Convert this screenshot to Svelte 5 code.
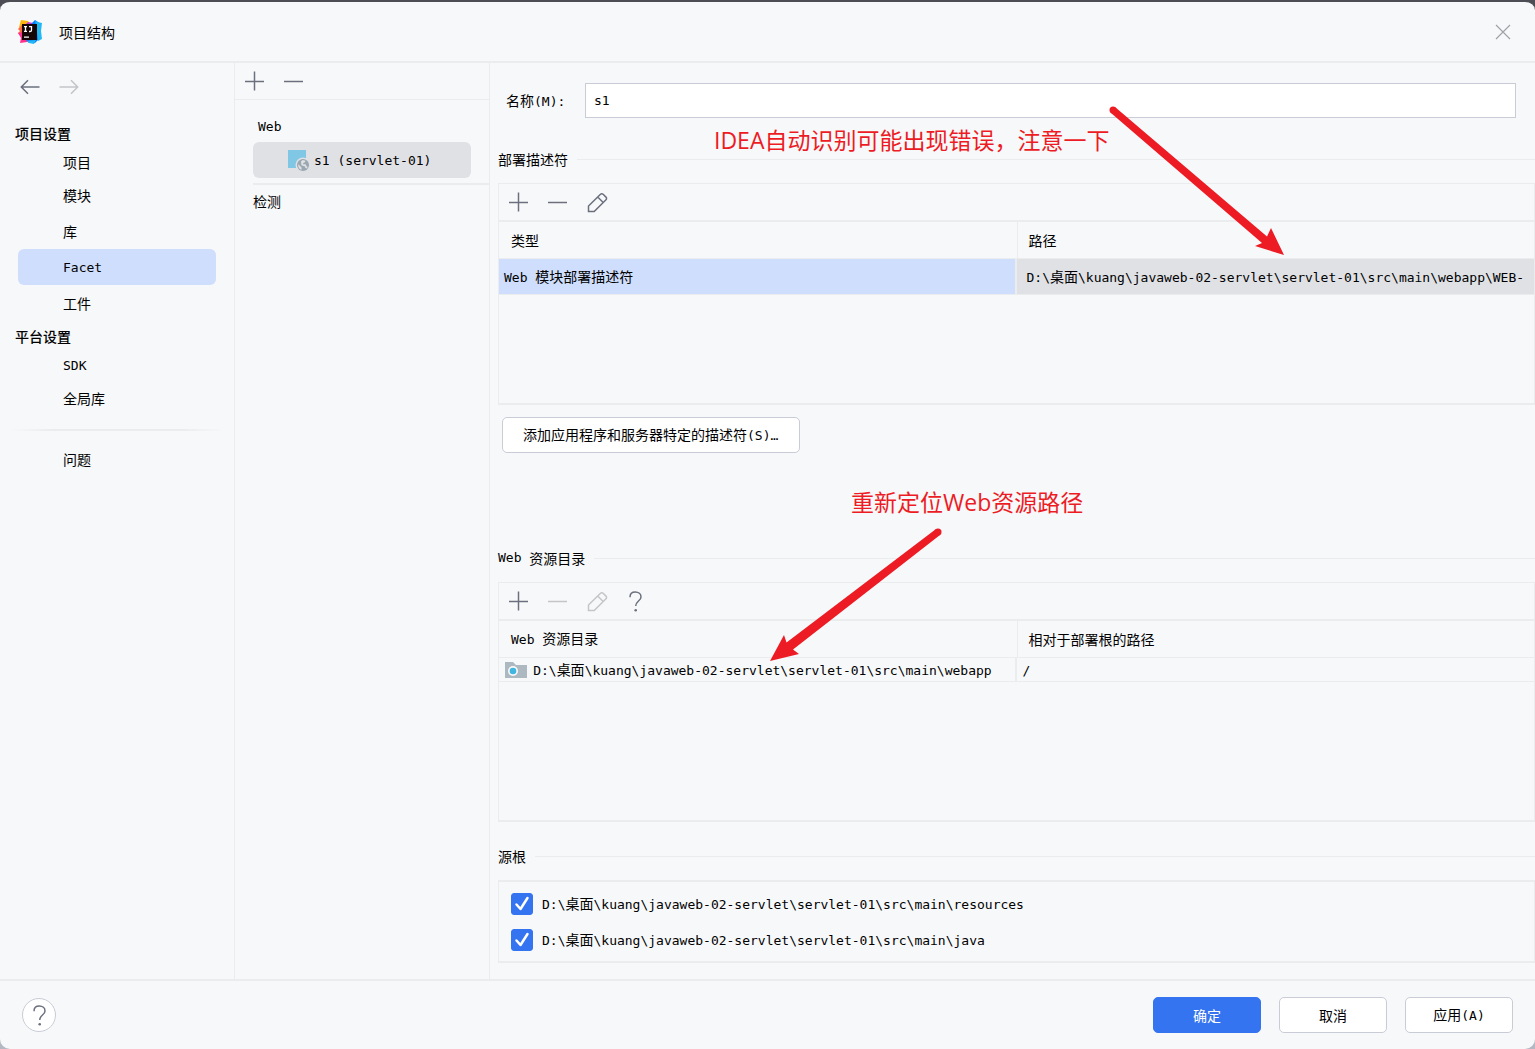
<script>
  const root = "D:\\桌面\\kuang\\javaweb-02-servlet\\servlet-01\\src\\main";

  const groups = [
    { title: "项目设置", items: ["项目", "模块", "库", "Facet", "工件"] },
    { title: "平台设置", items: ["SDK", "全局库"] },
  ];

  let selected = $state("Facet");
  let name = $state("s1");
  let sources = $state([
    { path: root + "\\resources", checked: true },
    { path: root + "\\java", checked: true },
  ]);

  // split into latin and chinese runs, each run gets its own size
  function runs(text) {
    return text.split(/([\x20-\x7e…]+)/).filter((r) => r !== "");
  }

  function isLatin(run) {
    return /^[\x20-\x7e…]/.test(run);
  }
</script>

{#snippet label(text)}{#each runs(text) as run}{#if isLatin(run)}<span class="latin">{run}</span>{:else}{run}{/if}{/each}{/snippet}

{#snippet plus()}
  <svg class="icon" viewBox="0 0 24 24"><path d="M12.5 2.5v19M3 12.5h19" /></svg>
{/snippet}

{#snippet minus()}
  <svg class="icon" viewBox="0 0 24 24"><path d="M3 12.5h19" /></svg>
{/snippet}

{#snippet pencil()}
  <svg class="icon" viewBox="0 0 24 24">
    <path d="M4.500 21.500v-5.500L16.500 4.200a1.800 1.800 0 0 1 2.600 0l2.900 2.900a1.800 1.800 0 0 1 0 2.600L10.200 21.500z M13.700 7l5.500 5.500" />
  </svg>
{/snippet}

{#snippet question()}
  <svg class="icon" viewBox="0 0 24 24">
    <path d="M7 8.200C7 5 9 3 12.300 3s5.700 2 5.700 4.900c0 4.100-5.300 4.300-5.300 9.100" />
    <circle class="dot" cx="12.700" cy="21.200" r="1.300" />
  </svg>
{/snippet}

<div class="dialog">
  <header>
    <svg class="logo" viewBox="0 0 24 24">
      <path fill="#fdb60d" d="M3 0l7 1 3 4-8 7-4-5z" />
      <path fill="#fe6a3a" d="M0 9l4-4 4 5-3 8-5-5 2-2z" />
      <path fill="#ff318c" d="M0 13l5-1 7 9-3 1-7 1 1-5z" />
      <path fill="#c33bd6" d="M10 2l5 1-3 4-6-1z" />
      <path fill="#087cfa" d="M14 3l3-3 6 4-1 14-5 5-6 0-4-4z" />
      <path fill="#21b8f4" d="M17 0l2 2 5 1-1 8 1 8-4 2-1-9zM9 21l9-1-2 4-5-1z" />
      <rect x="4" y="4" width="15" height="16" fill="#150608" />
      <path fill="none" stroke="#fff" stroke-width="1.300" d="M6 6.600h3M7.500 6.600v4.800M6 11.400h3M11 6.600h2.500v3.600q0 1.300-1.500 1.300h-1M6 17.200h5" />
    </svg>
    <h1>项目结构</h1>
    <button class="close" aria-label="关闭">
      <svg class="icon" viewBox="0 0 24 24"><path d="M5 5l14 14M19 5L5 19" /></svg>
    </button>
  </header>

  <div class="body">
    <nav>
      <div class="history">
        <button aria-label="后退">
          <svg class="icon" viewBox="0 0 24 24"><path d="M21.500 12H3.500M10 5.300L3.300 12l6.700 6.700" /></svg>
        </button>
        <button aria-label="前进" disabled>
          <svg class="icon" viewBox="0 0 24 24"><path d="M2.500 12h18M14 5.300l6.700 6.700-6.700 6.700" /></svg>
        </button>
      </div>
      {#each groups as group}
        <section>
          <h2>{group.title}</h2>
          <ul>
            {#each group.items as item}
              <li>
                <button class:active={selected === item} onclick={() => (selected = item)}>{@render label(item)}</button>
              </li>
            {/each}
          </ul>
        </section>
      {/each}
      <hr />
      <button class="problems">问题</button>
    </nav>

    <aside>
      <div class="toolbar">
        <button aria-label="添加">{@render plus()}</button>
        <button aria-label="移除">{@render minus()}</button>
      </div>
      <div class="tree">
        <p>{@render label("Web")}</p>
        <button class="facet">
          <svg viewBox="0 0 22 22">
            <rect width="18" height="18" fill="#7fc7e4" />
            <circle cx="15" cy="15" r="7.500" fill="#dfe1e5" />
            <circle cx="15" cy="15" r="6" fill="#9aa7b0" />
            <path fill="#dfe1e5" d="M10.300 14.200l3.200 3.200v2.400c-2-.5-3.700-2.800-3.200-5.600zM13 11.500l1.500-1.400 3 .6-.6 1.600-1.600.6-.4 1.400h2.800l.8 2 1.200.6-1 1.500-1.300-.4-.4-1.500-3.600-1.200z" />
          </svg>
          {@render label("s1 (servlet-01)")}
        </button>
        <button class="check">检测</button>
      </div>
    </aside>

    <main>
      <div class="name">
        <label for="name">{@render label("名称(M):")}</label>
        <input id="name" type="text" bind:value={name} />
      </div>

      <h3>部署描述符</h3>
      <div class="panel descriptors">
        <div class="toolbar">
          <button aria-label="添加">{@render plus()}</button>
          <button aria-label="移除">{@render minus()}</button>
          <button aria-label="编辑">{@render pencil()}</button>
        </div>
        <table>
          <thead>
            <tr><th>类型</th><th>路径</th></tr>
          </thead>
          <tbody>
            <tr class="selected">
              <td>{@render label("Web 模块部署描述符")}</td>
              <td>{@render label(root + "\\webapp\\WEB-")}</td>
            </tr>
          </tbody>
        </table>
      </div>
      <button class="push add">{@render label("添加应用程序和服务器特定的描述符(S)…")}</button>

      <h3>{@render label("Web 资源目录")}</h3>
      <div class="panel resources">
        <div class="toolbar">
          <button aria-label="添加">{@render plus()}</button>
          <button aria-label="移除" disabled>{@render minus()}</button>
          <button aria-label="编辑" disabled>{@render pencil()}</button>
          <button aria-label="帮助">{@render question()}</button>
        </div>
        <table>
          <thead>
            <tr><th>{@render label("Web 资源目录")}</th><th>相对于部署根的路径</th></tr>
          </thead>
          <tbody>
            <tr>
              <td>
                <svg class="folder" viewBox="0 0 22 18">
                  <path fill="#adb8c0" d="M0 0h8l3 3h11v13H0z" />
                  <circle cx="8" cy="9" r="5" fill="#f7f8fa" />
                  <circle cx="8" cy="9" r="3.300" fill="#40b6e0" />
                </svg>
                {@render label(root + "\\webapp")}
              </td>
              <td>{@render label("/")}</td>
            </tr>
          </tbody>
        </table>
      </div>

      <h3>源根</h3>
      <div class="panel sources">
        {#each sources as source}
          <label>
            <span class="tick">
              <input type="checkbox" bind:checked={source.checked} />
              {#if source.checked}
                <svg viewBox="0 0 22 22"><path d="M5.500 11.500l4 4.500 7-11" /></svg>
              {/if}
            </span>
            <span>{@render label(source.path)}</span>
          </label>
        {/each}
      </div>
    </main>
  </div>

  <footer>
    <button class="help" aria-label="帮助">{@render question()}</button>
    <button class="push primary">确定</button>
    <button class="push">取消</button>
    <button class="push">{@render label("应用(A)")}</button>
  </footer>

  <!-- red notes drawn over the dialog -->
  <p class="note note-path">IDEA自动识别可能出现错误，注意一下</p>
  <svg class="arrow arrow-path" viewBox="0 0 180 156">
    <circle cx="8" cy="8" r="3.500" />
    <path d="M5.700 10.700L10.300 5.300L162 134.500L166 126L179 153L150 144L157 141z" />
  </svg>
  <p class="note note-web">重新定位Web资源路径</p>
  <svg class="arrow arrow-web" viewBox="0 0 180 140">
    <circle cx="173" cy="8" r="3.500" />
    <path d="M171 5L175 11L28 125.500L34 130L5 137L19 111L21.500 118.500z" />
  </svg>
</div>

<style>
  :global(body) {
    background: linear-gradient(#4d4d55 50%, #b4b8c2 50%);
  }

  .dialog {
    position: relative;
    display: flex;
    flex-direction: column;
    box-sizing: border-box;
    min-height: 100vh;
    border-radius: 10px;
    border-top: 2px solid #4d4d55;
    background: #f7f8fa;
    overflow: hidden;
    color: #000;
    font-family: "Noto Sans CJK SC", sans-serif;
    font-size: 14px;
    line-height: 20px;
  }

  .latin {
    font-family: "DejaVu Sans Mono", monospace;
    font-size: 13px;
    white-space: pre;
  }

  h1,
  h2,
  h3,
  p,
  ul {
    margin: 0;
    padding: 0;
    font-size: 14px;
    font-weight: 400;
    list-style: none;
  }

  button {
    padding: 0;
    border: none;
    background: none;
    color: inherit;
    font: inherit;
    white-space: nowrap;
  }

  .icon {
    display: block;
    width: 24px;
    height: 24px;
    fill: none;
    stroke: #6c707e;
    stroke-width: 1.5;
  }

  .icon .dot {
    fill: #6c707e;
    stroke: none;
  }

  button:disabled .icon {
    stroke: #c4c5c9;
  }

  header {
    display: flex;
    align-items: center;
    height: 59px;
    padding: 0 20px 0 18px;
    border-bottom: 2px solid #ebecee;
  }

  .logo {
    width: 24px;
    height: 24px;
    margin-right: 17px;
  }

  .close {
    margin-left: auto;
  }

  .close .icon {
    stroke: #a0a2a8;
    stroke-width: 1.2;
  }

  .body {
    display: flex;
    flex: 1;
  }

  nav {
    width: 234px;
    flex: none;
    border-right: 1px solid #ebecee;
  }

  .history {
    display: flex;
    gap: 15px;
    padding: 12px 18px 20px;
  }

  section + section {
    margin-top: 1px;
  }

  h2 {
    padding-left: 15px;
    font-weight: 500;
    line-height: 28px;
  }

  nav li button,
  .problems {
    display: block;
    width: 198px;
    height: 36px;
    margin-left: 18px;
    padding-left: 45px;
    border-radius: 6px;
    text-align: left;
  }

  nav li:first-child button {
    height: 30px;
  }

  nav .active {
    background: #cfdefc;
  }

  hr {
    height: 2px;
    margin: 13px 10px 10px;
    border: none;
    background: linear-gradient(90deg, transparent, #ebecee 20%, #ebecee 80%, transparent);
  }

  aside {
    width: 254px;
    flex: none;
    border-right: 1px solid #ebecee;
  }

  .toolbar {
    display: flex;
    align-items: center;
    gap: 15px;
    height: 36px;
    padding-left: 7px;
    border-bottom: 1px solid #ebecee;
  }

  .tree {
    padding: 16px 0 0 18px;
  }

  .tree p {
    padding: 0 5px 6px;
    line-height: 18px;
  }

  .facet {
    display: flex;
    align-items: center;
    gap: 4px;
    box-sizing: border-box;
    width: 218px;
    height: 36px;
    padding: 2px 0 0 35px;
    border-radius: 6px;
    background: #dfe1e5;
  }

  .facet svg {
    width: 22px;
    height: 22px;
  }

  .check {
    display: block;
    width: 100%;
    margin-top: 5px;
    padding-top: 6px;
    border-top: 2px solid #ebecee;
    text-align: left;
  }

  main {
    display: flex;
    flex: 1;
    flex-direction: column;
    min-width: 0;
    padding: 20px 0 16px 8px;
  }

  .name {
    display: flex;
    align-items: center;
    padding: 0 19px 0 8px;
    margin-bottom: 31px;
  }

  .name label {
    width: 79px;
  }

  .name input {
    box-sizing: border-box;
    flex: 1;
    height: 35px;
    padding: 0 8px;
    border: 1px solid #c9ccd6;
    background: #fff;
    color: #000;
    font-family: "DejaVu Sans Mono", monospace;
    font-size: 13px;
  }

  h3 {
    display: flex;
    align-items: center;
    margin-bottom: 14px;
    white-space: pre;
  }

  h3::after {
    content: "";
    flex: 1;
    height: 1px;
    margin-left: 9px;
    background: #ebecee;
  }

  .panel {
    border: 1px solid #ebecee;
    border-bottom-width: 2px;
  }

  .panel .toolbar {
    border-bottom-width: 2px;
  }

  .descriptors {
    min-height: 219px;
  }

  .resources {
    min-height: 237px;
    margin-bottom: 24px;
  }

  table {
    width: 100%;
    table-layout: fixed;
    border-collapse: separate;
    border-spacing: 0;
  }

  th,
  td {
    box-sizing: border-box;
    padding: 0 0 0 12px;
    border-bottom: 1px solid #ebecee;
    font-weight: 400;
    text-align: left;
    white-space: nowrap;
    overflow: hidden;
  }

  th {
    height: 37px;
  }

  td {
    height: 24px;
    padding-left: 6px;
    border-right: 2px solid #ebecee;
  }

  td:last-child {
    border-right: none;
  }

  th + th {
    padding-left: 11px;
    border-left: 1px solid #ebecee;
  }

  .selected td {
    height: 36px;
    padding-left: 5px;
    background: #cfdefc;
  }

  .selected td + td {
    padding-left: 10px;
    background: #dfe1e5;
  }

  .folder {
    width: 22px;
    height: 18px;
    margin-right: 3px;
    vertical-align: middle;
  }

  .push {
    box-sizing: border-box;
    width: 108px;
    height: 36px;
    border: 1px solid #c9ccd6;
    border-radius: 5px;
    background: #fff;
  }

  .add {
    width: auto;
    align-self: flex-start;
    margin: 12px 4px 95px;
    padding: 0 21px 0 20px;
  }

  .primary {
    border-color: #3574f0;
    background: #3574f0;
    color: #fff;
  }

  .sources {
    padding: 4px 12px 3px;
    border-top-width: 2px;
  }

  .sources label {
    display: flex;
    align-items: center;
    gap: 9px;
    height: 36px;
  }

  .tick {
    display: grid;
  }

  .tick input,
  .tick svg {
    grid-area: 1 / 1;
    width: 22px;
    height: 22px;
    margin: 0;
  }

  .tick input {
    appearance: none;
    border: 1px solid #c9ccd6;
    border-radius: 3px;
  }

  .tick input:checked {
    border-color: #3574f0;
    background: #3574f0;
  }

  .tick svg {
    fill: none;
    stroke: #fff;
    stroke-width: 2.5;
    stroke-linecap: round;
    stroke-linejoin: round;
    pointer-events: none;
  }

  footer {
    display: flex;
    align-items: center;
    gap: 18px;
    height: 68px;
    padding: 0 22px;
    border-top: 2px solid #ebecee;
  }

  .help {
    display: grid;
    place-items: center;
    box-sizing: border-box;
    width: 34px;
    height: 34px;
    margin-right: auto;
    border: 1px solid #c9ccd6;
    border-radius: 50%;
    background: #fff;
  }

  .note {
    position: absolute;
    color: #ed1c24;
    font-family: "Open Sans", "Noto Sans CJK SC", sans-serif;
    font-size: 23px;
    line-height: 32px;
    white-space: nowrap;
    pointer-events: none;
  }

  .note-path {
    top: 122px;
    left: 714px;
  }

  .note-web {
    top: 484px;
    left: 851px;
  }

  .arrow {
    position: absolute;
    fill: #ed1c24;
    pointer-events: none;
  }

  .arrow-path {
    top: 100px;
    left: 1105px;
    width: 180px;
    height: 156px;
  }

  .arrow-web {
    top: 522px;
    left: 765px;
    width: 180px;
    height: 140px;
  }
</style>
